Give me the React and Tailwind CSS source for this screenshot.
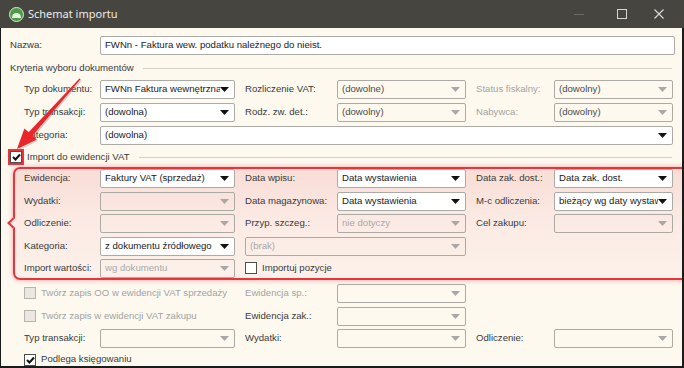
import React from 'react'

const FONT = { fontFamily: '"Liberation Sans", Arial, sans-serif' }

function Arrow({ dark }) {
  return (
    <svg width="9" height="5" viewBox="0 0 9 5" className="flex-shrink-0">
      <path d="M0 0 L9 0 L4.5 5 Z" fill={dark ? '#111' : '#a8a8a8'} />
    </svg>
  )
}

function Sel({ value = '', mode = 'on', span }) {
  // mode: on = enabled white, ro = readonly with value, off = disabled grey text
  const bg = mode === 'on' ? 'bg-white' : 'bg-transparent'
  const text = mode === 'on' ? 'text-[#1a1a1a]' : mode === 'ro' ? 'text-[#4a4a4a]' : 'text-[#a9a9a9]'
  return (
    <div
      className={`h-[19px] min-w-0 flex items-center border border-[#acaaa5] rounded-[2px] pl-[4px] pr-[5px] ${bg} ${span || ''}`}
    >
      <span className={`flex-1 min-w-0 whitespace-nowrap overflow-hidden ${text}`}>{value}</span>
      <Arrow dark={mode === 'on'} />
    </div>
  )
}

function Lbl({ children, gray, span }) {
  return (
    <div className={`whitespace-nowrap ${gray ? 'text-[#a3a3a3]' : 'text-[#3a3a3a]'} ${span || ''}`}>
      {children}
    </div>
  )
}

function Check({ checked, disabled, highlight }) {
  return (
    <div
      className={`w-[12px] h-[12px] flex items-center justify-center flex-shrink-0 ${
        highlight ? 'outline outline-2 outline-[#e8343a] shadow-[0_0_3px_rgba(232,52,58,0.6)]' : ''
      } ${disabled ? 'border border-[#b7b4ae] bg-[#ebe8e2]' : 'border border-[#4d4d4d] bg-white'}`}
    >
      {checked && (
        <svg width="9" height="8" viewBox="0 0 9 8">
          <path d="M1 4 L3.5 6.5 L8 1.5" stroke="#111" strokeWidth="2" fill="none" />
        </svg>
      )}
    </div>
  )
}

// label | select | gap | label | select | gap | label | select
function Row({ children }) {
  return (
    <div className="grid grid-cols-[76px_135px_10px_92px_129px_10px_78px_119px] items-center h-[19px]">
      {children}
    </div>
  )
}

export default function App() {
  return (
    <div className="w-[684px] h-[368px] bg-[#1b1b1b] overflow-hidden relative text-[9.6px]" style={FONT}>
      {/* Title bar */}
      <div className="h-[28px] bg-[#474540] flex items-center">
        <div className="ml-[9px] w-[15px] h-[15px] rounded-full bg-[#4e9a4a] border border-[#d8e8d0] flex items-center justify-center">
          <div className="w-[9px] h-[5px] rounded-t-full bg-[#e8f2e0] mt-[3px]" />
        </div>
        <div className="ml-[4px] text-[11px] text-[#ececec]" style={{ fontFamily: '"Noto Sans", sans-serif' }}>
          Schemat importu
        </div>
        <div className="flex-1" />
        <div className="w-[10px] h-[1px] bg-[#6c6a65] mr-[33px]" />
        <div className="w-[10px] h-[10px] border border-[#d6d6d6] mr-[27px]" />
        <svg width="10" height="10" viewBox="0 0 10 10" className="mr-[20px]">
          <path d="M0.5 0.5 L9.5 9.5 M9.5 0.5 L0.5 9.5" stroke="#d6d6d6" strokeWidth="1.2" />
        </svg>
      </div>

      {/* Content */}
      <div className="ml-[1px] mr-[2px] h-[338px] bg-[#fdf9ef] pl-[9px] pt-[8px] relative overflow-hidden">
        {/* Nazwa */}
        <div className="flex items-center h-[19px]">
          <div className="w-[90px] text-[#3a3a3a]">Nazwa:</div>
          <div className="w-[575px] h-[19px] flex items-center bg-white border border-[#acaaa5] rounded-[2px] pl-[4px] text-[#1a1a1a]">
            FWNn - Faktura wew. podatku należnego do nieist.
          </div>
        </div>

        {/* Kryteria */}
        <div className="flex items-center h-[14px] mt-[6px]">
          <span className="text-[#3a3a3a]">Kryteria wyboru dokumentów</span>
          <div className="flex-1 h-px bg-[#d3cfc6] ml-[9px] mr-[10px]" />
        </div>

        <div className="pl-[14px] mt-[5px] flex flex-col gap-[4px]">
          <Row>
            <Lbl>Typ dokumentu:</Lbl>
            <Sel value="FWNn Faktura wewnętrzna" />
            <div />
            <Lbl>Rozliczenie VAT:</Lbl>
            <Sel value="(dowolne)" mode="ro" />
            <div />
            <Lbl gray>Status fiskalny:</Lbl>
            <Sel value="(dowolny)" mode="ro" />
          </Row>
          <Row>
            <Lbl>Typ transakcji:</Lbl>
            <Sel value="(dowolna)" />
            <div />
            <Lbl>Rodz. zw. det.:</Lbl>
            <Sel value="(dowolny)" mode="ro" />
            <div />
            <Lbl gray>Nabywca:</Lbl>
            <Sel value="(dowolny)" mode="ro" />
          </Row>
          <Row>
            <Lbl>Kategoria:</Lbl>
            <Sel value="(dowolna)" span="col-span-7" />
          </Row>
        </div>

        {/* Import do ewidencji VAT */}
        <div className="flex items-center h-[14px] mt-[5px]">
          <Check checked highlight />
          <span className="ml-[5px] text-[#3a3a3a]">Import do ewidencji VAT</span>
          <div className="flex-1 h-px bg-[#d3cfc6] ml-[9px] mr-[10px]" />
        </div>

        {/* Highlighted block */}
        <div className="relative ml-[3px] -mr-[10px] mt-[3px] border-2 border-[#e8343a] rounded-l-[7px] shadow-[0_0_5px_rgba(232,52,58,0.45)] bg-gradient-to-b from-[#f8ddd6] via-[#fbebe4] to-[#fcf1ea] pl-[9px] flex flex-col gap-[3.5px]">
          <div className="absolute -left-[6px] top-[50px] w-[8px] h-[8px] rotate-45 border-l-2 border-b-2 border-[#e8343a] bg-[#fbece6]" />
          <Row>
            <Lbl>Ewidencja:</Lbl>
            <Sel value="Faktury VAT (sprzedaż)" />
            <div />
            <Lbl>Data wpisu:</Lbl>
            <Sel value="Data wystawienia" />
            <div />
            <Lbl>Data zak. dost.:</Lbl>
            <Sel value="Data zak. dost." />
          </Row>
          <Row>
            <Lbl>Wydatki:</Lbl>
            <Sel mode="off" />
            <div />
            <Lbl>Data magazynowa:</Lbl>
            <Sel value="Data wystawienia" />
            <div />
            <Lbl>M-c odliczenia:</Lbl>
            <Sel value="bieżący wg daty wystawienia" />
          </Row>
          <Row>
            <Lbl>Odliczenie:</Lbl>
            <Sel mode="off" />
            <div />
            <Lbl>Przyp. szczeg.:</Lbl>
            <Sel value="nie dotyczy" mode="off" />
            <div />
            <Lbl>Cel zakupu:</Lbl>
            <Sel mode="off" />
          </Row>
          <Row>
            <Lbl>Kategoria:</Lbl>
            <Sel value="z dokumentu źródłowego" />
            <div />
            <Sel value="(brak)" mode="off" span="col-span-2" />
          </Row>
          <Row>
            <Lbl>Import wartości:</Lbl>
            <Sel value="wg dokumentu" mode="off" />
            <div />
            <div className="col-span-2 flex items-center">
              <Check />
              <span className="ml-[5px] text-[#3a3a3a]">Importuj pozycje</span>
            </div>
          </Row>
        </div>

        {/* Below */}
        <div className="pl-[14px] mt-[4px] flex flex-col gap-[3.5px]">
          <Row>
            <div className="col-span-2 flex items-center">
              <Check disabled />
              <span className="ml-[5px] text-[#a3a3a3] whitespace-nowrap">Twórz zapis OO w ewidencji VAT sprzedaży</span>
            </div>
            <div />
            <Lbl gray>Ewidencja sp.:</Lbl>
            <Sel mode="off" />
          </Row>
          <Row>
            <div className="col-span-2 flex items-center">
              <Check disabled />
              <span className="ml-[5px] text-[#a3a3a3] whitespace-nowrap">Twórz zapis w ewidencji VAT zakupu</span>
            </div>
            <div />
            <Lbl>Ewidencja zak.:</Lbl>
            <Sel mode="off" />
          </Row>
          <Row>
            <Lbl>Typ transakcji:</Lbl>
            <Sel mode="off" />
            <div />
            <Lbl>Wydatki:</Lbl>
            <Sel mode="off" />
            <div />
            <Lbl>Odliczenie:</Lbl>
            <Sel mode="off" />
          </Row>
          <div className="flex items-center h-[14px] mt-[1px]">
            <Check checked />
            <span className="ml-[5px] text-[#3a3a3a]">Podlega księgowaniu</span>
          </div>
        </div>
      </div>

      {/* Red annotation arrow */}
      <svg width="100" height="160" viewBox="0 0 100 160" className="absolute left-0 top-0 pointer-events-none">
        <polygon
          points="81.8,80.6 33.6,137.3 37.8,141 18.2,150.6 25.6,130.1 29.8,133.8 80.8,80"
          fill="#7a7a7a"
          opacity="0.35"
        />
        <polygon
          points="80.6,79.2 32.6,135.6 36.8,139.4 17,149 24.4,128.6 28.6,132.2 79.4,78.6"
          fill="#e8262b"
        />
      </svg>
    </div>
  )
}
